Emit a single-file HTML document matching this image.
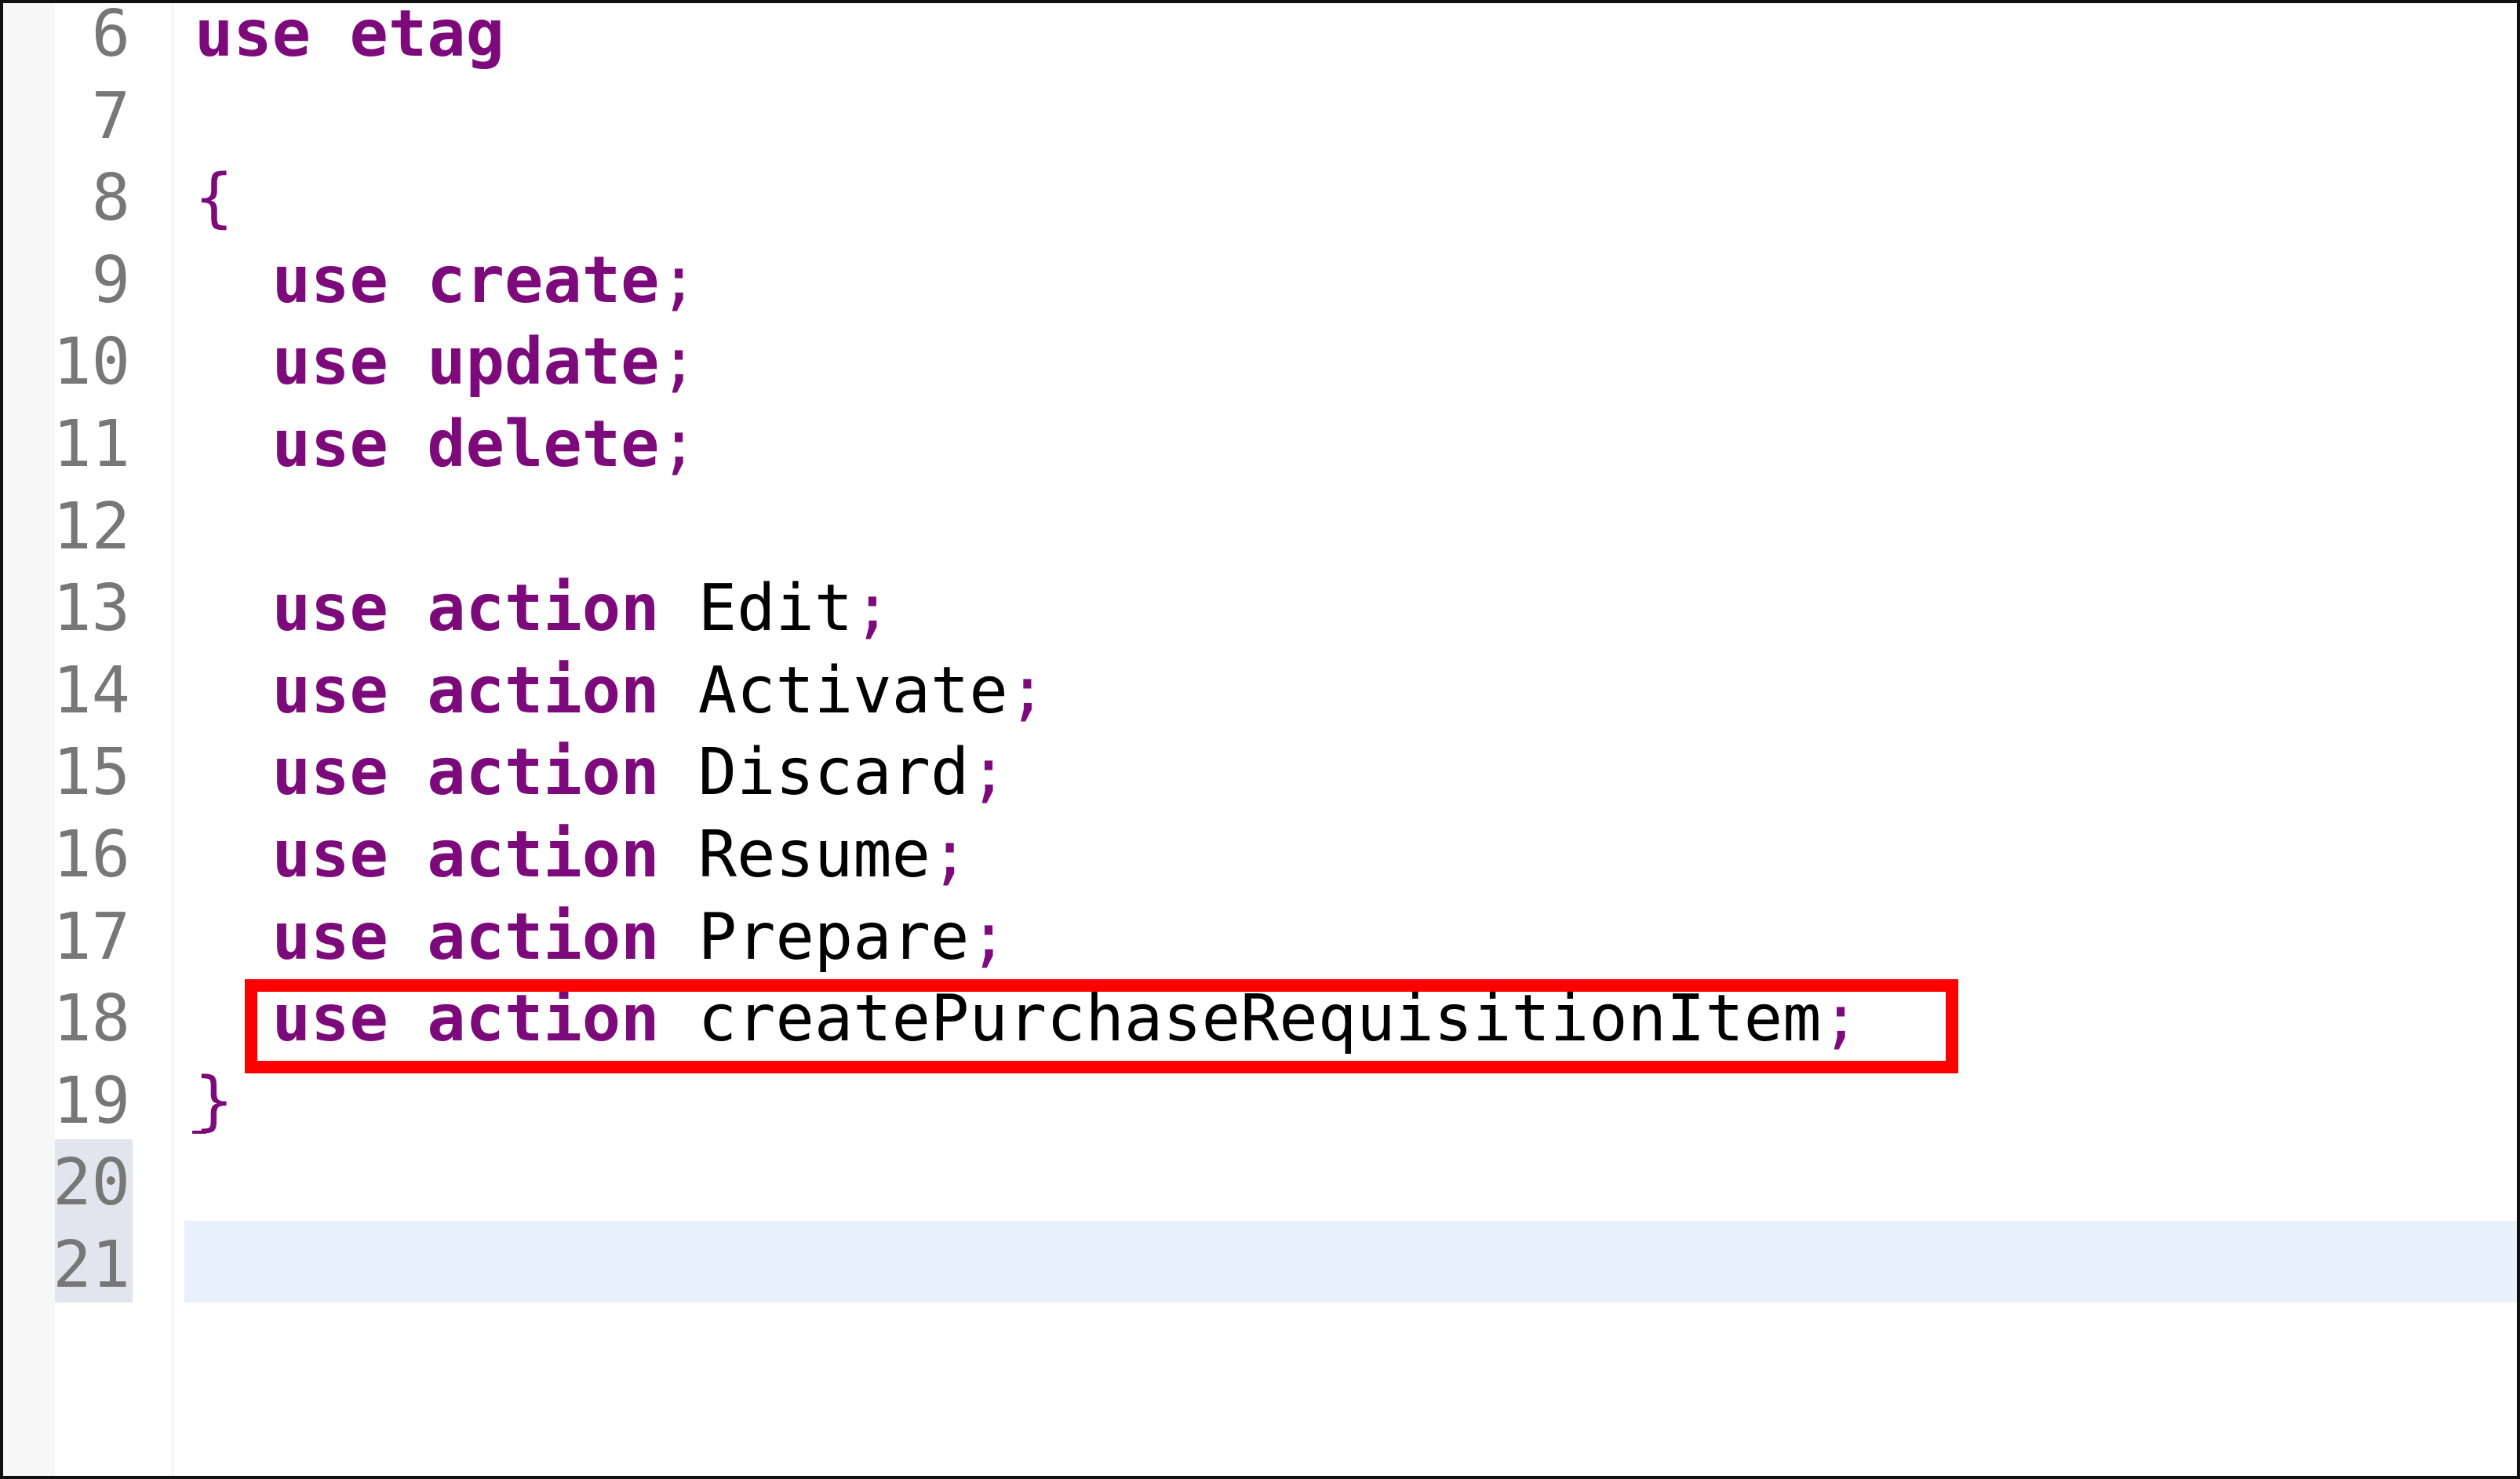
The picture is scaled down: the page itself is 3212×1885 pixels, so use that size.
<!DOCTYPE html>
<html><head><meta charset="utf-8"><style>
html,body{margin:0;padding:0;}
body{width:3212px;height:1885px;position:relative;overflow:hidden;background:#fff;font-family:"DejaVu Sans Mono","Liberation Mono",monospace;}
.frame{position:absolute;left:0;top:0;width:3204px;height:1877px;border:4px solid #111;}
.g1{position:absolute;left:4px;top:4px;width:66px;height:1877px;background:#f7f7f7;}
.vl{position:absolute;left:219px;top:4px;width:2px;height:1877px;background:#f0f0f0;}
.nhl{position:absolute;left:70px;top:1452px;width:99px;height:208px;background:#e4e4ef;}
.chl{position:absolute;left:235px;top:1556px;width:2973px;height:104px;background:#e8f0fc;}
.ln{position:absolute;left:0;width:166px;text-align:right;color:#777;font-size:82px;line-height:104.6px;}
.cl{position:absolute;left:248px;font-size:82px;line-height:104.6px;color:#000;white-space:pre;}
.k{color:#7d0a7a;font-weight:bold;}
.p{color:#7d0a7a;}
.box{position:absolute;left:312px;top:1248px;width:2152px;height:88px;border:16px solid #ff0000;}
</style></head><body>
<div class="frame"></div>
<div class="g1"></div>
<div class="vl"></div>
<div class="nhl"></div>
<div class="chl"></div>

<div class="ln" style="top:-8px">6</div>
<div class="ln" style="top:96.6px">7</div>
<div class="ln" style="top:201.2px">8</div>
<div class="ln" style="top:305.8px">9</div>
<div class="ln" style="top:410.4px">10</div>
<div class="ln" style="top:515px">11</div>
<div class="ln" style="top:619.6px">12</div>
<div class="ln" style="top:724.2px">13</div>
<div class="ln" style="top:828.8px">14</div>
<div class="ln" style="top:933.4px">15</div>
<div class="ln" style="top:1038px">16</div>
<div class="ln" style="top:1142.6px">17</div>
<div class="ln" style="top:1247.2px">18</div>
<div class="ln" style="top:1351.8px">19</div>
<div class="ln" style="top:1456.4px">20</div>
<div class="ln" style="top:1561px">21</div>

<div class="cl" style="top:-8px"><span class="k">use etag</span></div>
<div class="cl" style="top:201.2px"><span class="p">{</span></div>
<div class="cl" style="top:305.8px">  <span class="k">use create</span><span class="p">;</span></div>
<div class="cl" style="top:410.4px">  <span class="k">use update</span><span class="p">;</span></div>
<div class="cl" style="top:515px">  <span class="k">use delete</span><span class="p">;</span></div>
<div class="cl" style="top:724.2px">  <span class="k">use action</span> Edit<span class="p">;</span></div>
<div class="cl" style="top:828.8px">  <span class="k">use action</span> Activate<span class="p">;</span></div>
<div class="cl" style="top:933.4px">  <span class="k">use action</span> Discard<span class="p">;</span></div>
<div class="cl" style="top:1038px">  <span class="k">use action</span> Resume<span class="p">;</span></div>
<div class="cl" style="top:1142.6px">  <span class="k">use action</span> Prepare<span class="p">;</span></div>
<div class="cl" style="top:1247.2px">  <span class="k">use action</span> createPurchaseRequisitionItem<span class="p">;</span></div>
<div class="cl" style="top:1351.8px"><span class="p">}</span></div>
<div style="position:absolute;left:245px;top:1441px;width:18px;height:4px;background:#7d0a7a;"></div>
<div class="box"></div>
</body></html>
